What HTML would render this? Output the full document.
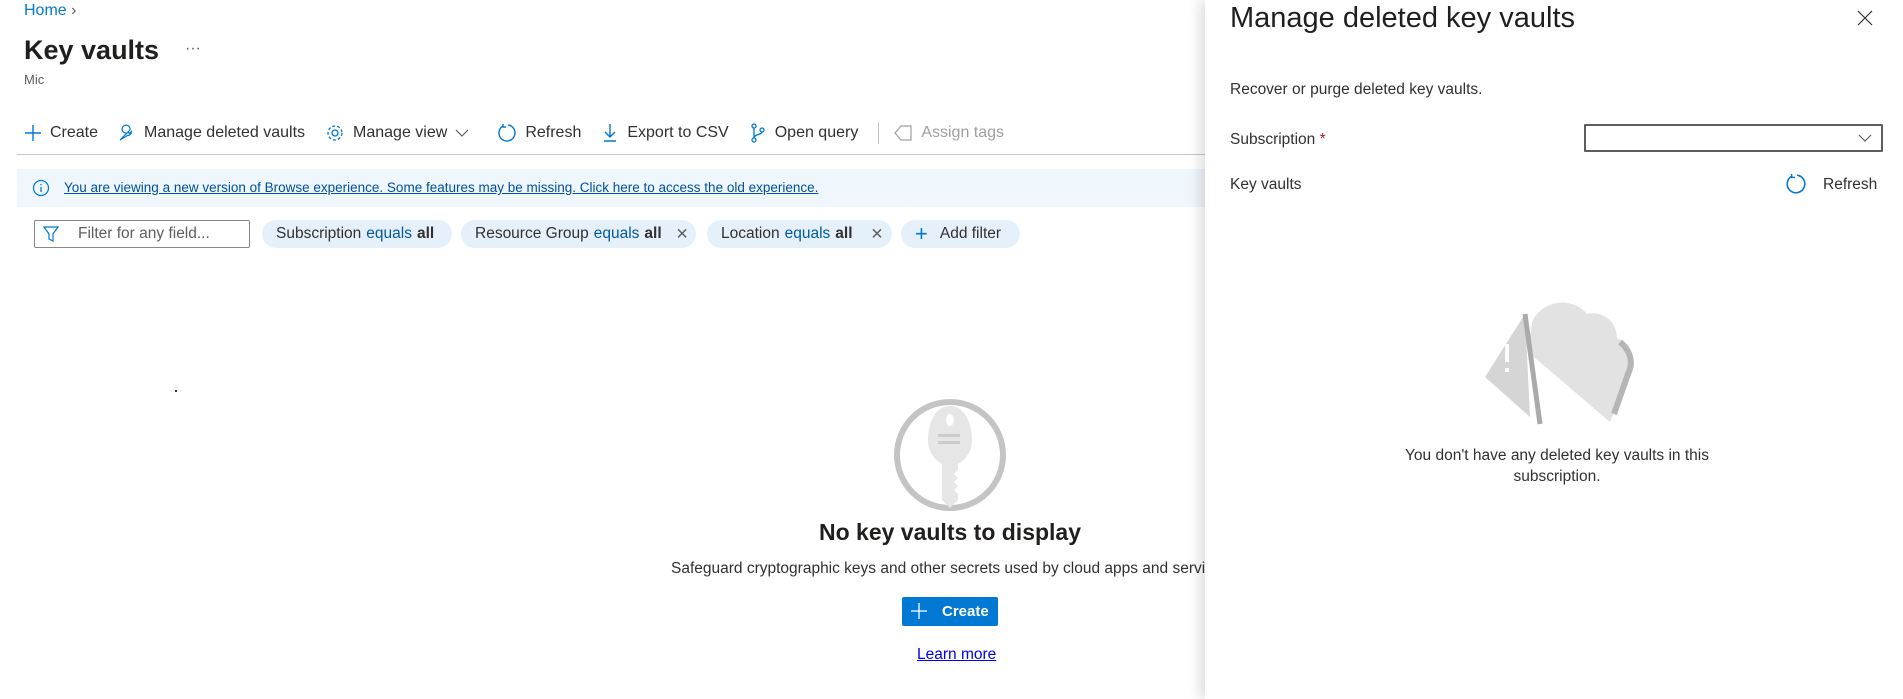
<!DOCTYPE html>
<html><head><meta charset="utf-8"><style>
*{margin:0;padding:0;box-sizing:border-box}
body{width:1903px;height:699px;overflow:hidden;background:#fff;font-family:"Liberation Sans",sans-serif;color:#323130;position:relative;font-size:16px}
.a{position:absolute;white-space:nowrap}
.tb{position:absolute;top:122px;left:24px;display:flex;align-items:center;gap:0;font-size:16px;white-space:nowrap}
.tb span{display:flex;align-items:center;margin-right:20px}
.tb svg{margin-right:8px}
.chip{position:absolute;top:220px;height:28px;background:#e5f0fb;border-radius:14px;font-size:15.5px;display:flex;align-items:center;padding:0 14px;white-space:nowrap}
.chip i{font-style:normal;color:#005a9e;margin:0 5px}
</style></head><body>
<div class="a" style="left:24px;top:2px;font-size:16px;color:#0078d4">Home <span style="color:#605e5c">›</span></div>
<div class="a" style="left:24px;top:35px;font-size:27px;font-weight:600;color:#201f1e">Key vaults</div>
<div class="a" style="left:185px;top:40px;font-size:16px;color:#605e5c">···</div>
<div class="a" style="left:24px;top:72px;font-size:13px;color:#605e5c">Mic</div>
<div class="tb">
<span><svg width="18" height="18" viewBox="0 0 18 18"><path d="M9 1v16M1 9h16" stroke="#0078d4" stroke-width="1.4"/></svg>Create</span>
<span><svg width="18" height="18" viewBox="0 0 18 18"><path d="M2 16l7-7a4 4 0 1 1 3 -3l-2 2 1.5 1.5 2-2a4 4 0 0 1-4 4z" fill="none" stroke="#0078d4" stroke-width="1.2"/></svg>Manage deleted vaults</span>
<span><svg width="20" height="20" viewBox="0 0 20 20"><circle cx="10" cy="10" r="3" fill="none" stroke="#0078d4" stroke-width="1.3"/><circle cx="10" cy="10" r="7" fill="none" stroke="#0078d4" stroke-width="1.3" stroke-dasharray="3 2"/></svg>Manage view <svg style="margin-left:8px" width="14" height="10" viewBox="0 0 14 10"><path d="M1 2l6 6 6-6" fill="none" stroke="#605e5c" stroke-width="1.2"/></svg></span>
<span><svg width="20" height="20" viewBox="0 0 20 20"><path d="M6 3a8 8 0 1 0 5-1" fill="none" stroke="#0078d4" stroke-width="1.4"/><path d="M6 1v3h3" fill="none" stroke="#0078d4" stroke-width="1.4"/></svg>Refresh</span>
<span><svg width="18" height="20" viewBox="0 0 18 20"><path d="M9 1v13M4 9l5 5 5-5M3 18h12" fill="none" stroke="#0078d4" stroke-width="1.4"/></svg>Export to CSV</span>
<span><svg width="18" height="20" viewBox="0 0 18 20"><circle cx="5" cy="3" r="2" fill="none" stroke="#0078d4" stroke-width="1.3"/><circle cx="13" cy="7" r="2" fill="none" stroke="#0078d4" stroke-width="1.3"/><circle cx="5" cy="17" r="2" fill="none" stroke="#0078d4" stroke-width="1.3"/><path d="M5 5v10M13 9c0 3-8 2-8 6" fill="none" stroke="#0078d4" stroke-width="1.3"/></svg>Open query</span>
<span style="border-left:1px solid #c8c6c4;height:22px;margin-right:14px"></span>
<span style="color:#a19f9d"><svg width="20" height="18" viewBox="0 0 20 18"><path d="M2 9l6-7h10v14H8z" fill="none" stroke="#a19f9d" stroke-width="1.2"/></svg>Assign tags</span>
</div>
<div class="a" style="left:17px;top:154px;width:1188px;height:1px;background:#c8c6c4"></div>
<div class="a" style="left:17px;top:169px;width:1188px;height:38px;background:#eff6fc"></div>
<svg class="a" style="left:32px;top:179px" width="18" height="18" viewBox="0 0 18 18"><circle cx="9" cy="9" r="7.5" fill="none" stroke="#0078d4" stroke-width="1.2"/><path d="M9 8v5M9 5v1.3" stroke="#0078d4" stroke-width="1.3"/></svg>
<div class="a" style="left:64px;top:180px;font-size:13.5px;color:#0050a0;text-decoration:underline">You are viewing a new version of Browse experience. Some features may be missing. Click here to access the old experience.</div>
<div class="a" style="left:34px;top:220px;width:216px;height:28px;border:1px solid #8a8886;border-radius:2px;font-size:15.5px;color:#605e5c;padding:4px 0 0 43px">Filter for any field...</div>
<svg class="a" style="left:43px;top:226px" width="16" height="16" viewBox="0 0 16 16"><path d="M1 1h14l-5 7v7l-4-2V8z" fill="none" stroke="#0078d4" stroke-width="1.2"/></svg>
<div class="chip" style="left:262px;width:190px">Subscription<i>equals</i><b>all</b></div>
<div class="chip" style="left:461px;width:235px">Resource Group<i>equals</i><b>all</b><span style="margin-left:14px;color:#605e5c">✕</span></div>
<div class="chip" style="left:707px;width:185px">Location<i>equals</i><b>all</b><span style="margin-left:18px;color:#605e5c">✕</span></div>
<div class="chip" style="left:901px;width:119px"><span style="color:#0078d4;font-size:22px;margin-right:12px">+</span>Add filter</div>
<div class="a" style="left:175px;top:390px;width:2px;height:2px;background:#333"></div>
<svg class="a" style="left:893px;top:398px" width="114" height="114" viewBox="0 0 114 114"><circle cx="57" cy="57" r="53" fill="#fff" stroke="#c4c4c4" stroke-width="6"/><path d="M57 8c-14 0-22 16-22 34 0 12 7 20 14 24v36l8 8 8-8v-6l-4-4 4-4-4-4 4-4-4-4 4-4V66c7-4 14-12 14-24 0-18-8-34-22-34z" fill="#e6e6e6"/><ellipse cx="57" cy="22" rx="4" ry="6" fill="#fff"/><rect x="45" y="36" width="22" height="3" fill="#ccc"/><rect x="45" y="43" width="22" height="3" fill="#ccc"/></svg>
<div class="a" style="left:750px;width:400px;text-align:center;top:519px;font-size:23px;font-weight:600;color:#201f1e">No key vaults to display</div>
<div class="a" style="left:671px;top:560px;font-size:15.5px;color:#323130">Safeguard cryptographic keys and other secrets used by cloud apps and services.</div>
<div class="a" style="left:902px;top:597px;width:96px;height:29px;background:#0078d4;border-radius:2px;color:#fff;font-size:15px;font-weight:600;padding:6px 0 0 40px">Create</div>
<svg class="a" style="left:910px;top:602px" width="18" height="18" viewBox="0 0 18 18"><path d="M9 1v16M1 9h16" stroke="#fff" stroke-width="1.3"/></svg>
<div class="a" style="left:917px;top:646px;font-size:15.5px;color:#0000ee;text-decoration:underline">Learn more</div>

<div class="a" style="left:1205px;top:0;width:698px;height:699px;background:#fff;box-shadow:-6px 0 12px rgba(0,0,0,0.12)"></div>
<div class="a" style="left:1230px;top:2px;font-size:29px;color:#201f1e">Manage deleted key vaults</div>
<svg class="a" style="left:1857px;top:10px" width="16" height="16" viewBox="0 0 16 16"><path d="M1 1l14 14M15 1L1 15" stroke="#323130" stroke-width="1.2"/></svg>
<div class="a" style="left:1230px;top:81px;font-size:15.5px">Recover or purge deleted key vaults.</div>
<div class="a" style="left:1230px;top:131px;font-size:15.5px">Subscription <span style="color:#a4262c">*</span></div>
<div class="a" style="left:1584px;top:124px;width:299px;height:28px;border:2px solid #605e5c;border-radius:1px"></div>
<svg class="a" style="left:1858px;top:133px" width="14" height="10" viewBox="0 0 14 10"><path d="M1 2l6 6 6-6" fill="none" stroke="#605e5c" stroke-width="1.2"/></svg>
<div class="a" style="left:1230px;top:176px;font-size:15.5px">Key vaults</div>
<svg class="a" style="left:1785px;top:173px" width="22" height="22" viewBox="0 0 20 20"><path d="M6 3a8 8 0 1 0 5-1" fill="none" stroke="#0078d4" stroke-width="1.4"/><path d="M6 1v3h3" fill="none" stroke="#0078d4" stroke-width="1.4"/></svg>
<div class="a" style="left:1823px;top:176px;font-size:15.5px">Refresh</div>
<svg class="a" style="left:1480px;top:292px" width="155" height="135" viewBox="0 0 155 135"><path d="M52 30c10-22 40-26 55-8 16-4 30 8 30 24 12 6 18 20 12 34L130 130 48 60z" fill="#e2e2e2"/><path d="M140 50c10 8 14 20 8 32l-14 40" fill="none" stroke="#b5b5b5" stroke-width="6"/><path d="M45 22L5 85l45 40z" fill="#d5d5d5"/><path d="M45 22l15 110" stroke="#aaa" stroke-width="5"/><path d="M27 52v18M27 76v4" stroke="#fff" stroke-width="4"/></svg>
<div class="a" style="left:1357px;width:400px;text-align:center;top:445px;font-size:15.5px;line-height:21px;white-space:normal">You don't have any deleted key vaults in this<br>subscription.</div>
</body></html>
